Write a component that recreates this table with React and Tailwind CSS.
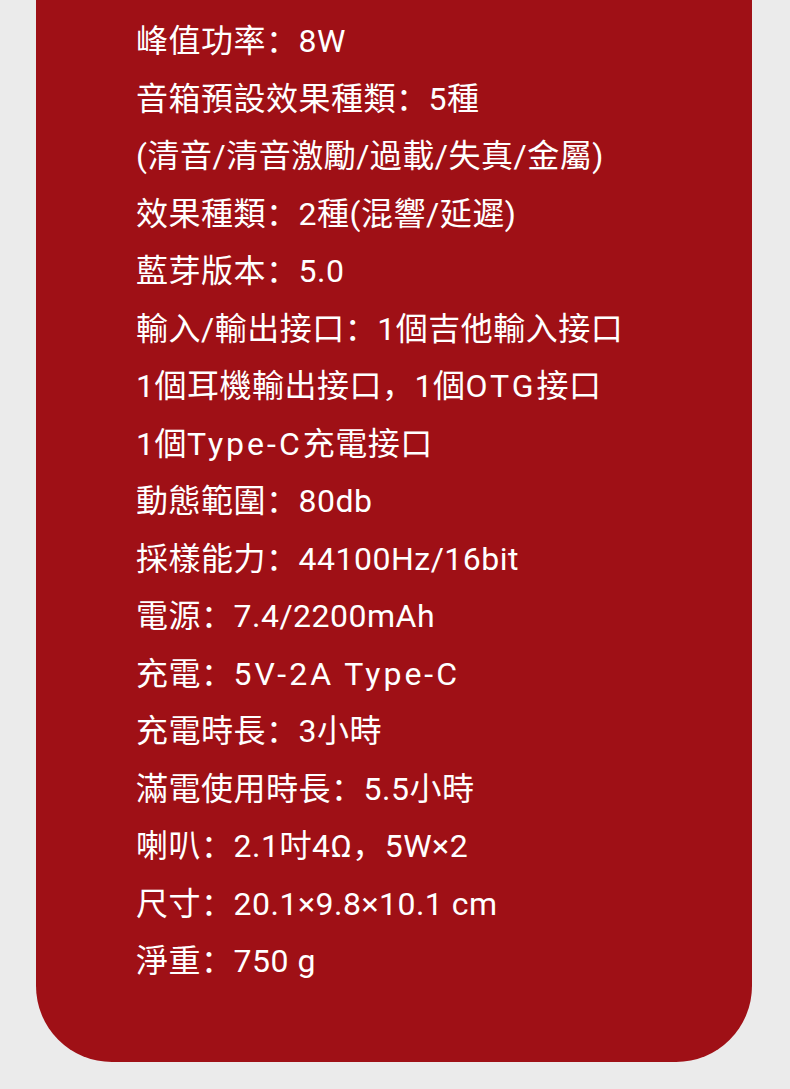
const wide = (t) => <span className="tracking-[3px]">{t}</span>;

const specs = [
  ["峰值功率：8W"],
  ["音箱預設效果種類：5種"],
  ["(清音/清音激勵/過載/失真/金屬)"],
  ["效果種類：2種(混響/延遲)"],
  ["藍芽版本：5.0"],
  ["輸入/輸出接口：1個吉他輸入接口"],
  ["1個耳機輸出接口，1個", wide("OTG"), "接口"],
  ["1個", wide("Type-C"), "充電接口"],
  ["動態範圍：80db"],
  ["採樣能力：44100Hz/16bit"],
  ["電源：7.4/2200mAh"],
  ["充電：", wide("5V-2A Type-C")],
  ["充電時長：3小時"],
  ["滿電使用時長：5.5小時"],
  ["喇叭：2.1吋4Ω，5W×2"],
  ["尺寸：20.1×9.8×10.1 cm"],
  ["淨重：750 g"],
];

export default function App() {
  return (
    <div className="min-h-screen bg-[#ebebeb] px-[36px] pb-[28px] [font-family:Roboto,'Noto_Sans_CJK_SC',sans-serif]">
      <div className="w-[716px] rounded-b-[76px] bg-[#9f1016] pl-[100px] pt-[13px] pb-[71px] text-white">
        {specs.map((parts, i) => (
          <p key={i} className="text-[32px] leading-[57.5px] tracking-[0.5px] whitespace-nowrap">
            {parts.map((p, j) => (
              <span key={j}>{p}</span>
            ))}
          </p>
        ))}
      </div>
    </div>
  );
}
